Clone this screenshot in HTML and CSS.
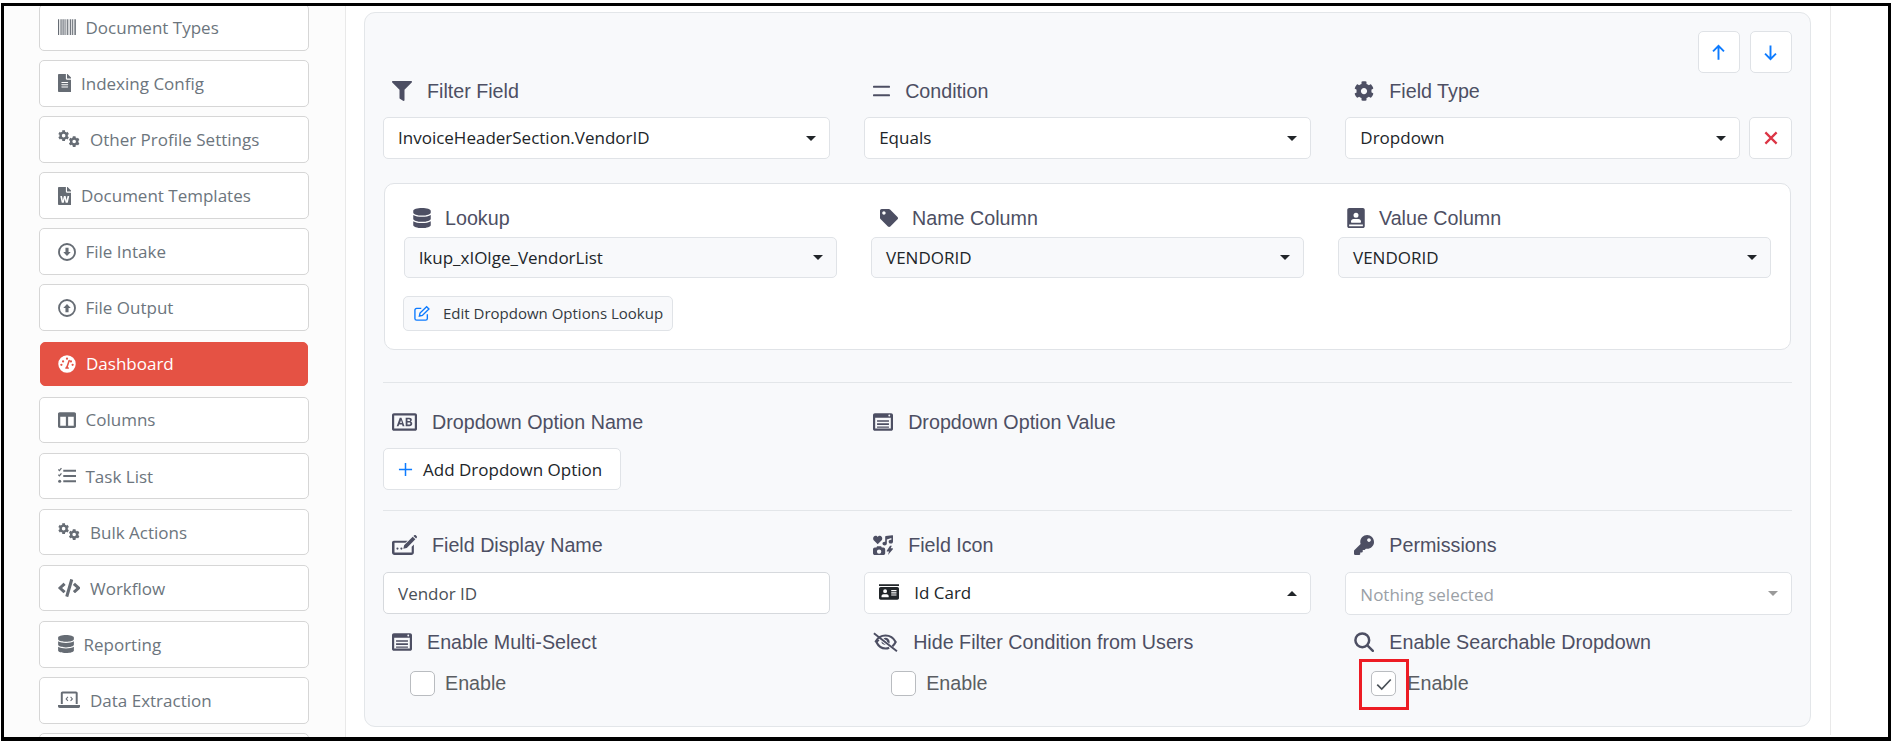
FILE: index.html
```html
<!DOCTYPE html>
<html lang="en">
<head>
<meta charset="utf-8">
<title>Dashboard filter configuration</title>
<link rel="stylesheet" href="styles.css">
</head>
<body>
<svg class="sprite" xmlns="http://www.w3.org/2000/svg">
  <symbol id="i-cog" viewBox="0 0 512 512"><path d="M487.4 315.7l-42.6-24.6c4.3-23.2 4.3-47 0-70.2l42.6-24.6c4.9-2.8 7.1-8.6 5.5-14-11.1-35.6-30-67.8-54.7-94.6-3.8-4.1-10-5.1-14.8-2.3L380.8 110c-17.9-15.4-38.5-27.3-60.8-35.1V25.8c0-5.6-3.9-10.5-9.4-11.7-36.7-8.2-74.3-7.8-109.2 0-5.5 1.2-9.4 6.1-9.4 11.7V75c-22.2 7.9-42.8 19.8-60.8 35.1L88.7 85.5c-4.9-2.8-11-1.9-14.8 2.3-24.7 26.7-43.6 58.9-54.7 94.6-1.7 5.4.6 11.2 5.5 14L67.3 221c-4.3 23.2-4.3 47 0 70.2l-42.6 24.6c-4.9 2.8-7.1 8.6-5.5 14 11.1 35.6 30 67.8 54.7 94.6 3.8 4.1 10 5.1 14.8 2.3l42.6-24.6c17.9 15.4 38.5 27.3 60.8 35.1v49.2c0 5.6 3.9 10.5 9.4 11.7 36.7 8.2 74.3 7.8 109.2 0 5.5-1.2 9.4-6.1 9.4-11.7v-49.2c22.2-7.9 42.8-19.8 60.8-35.1l42.6 24.6c4.9 2.8 11 1.9 14.8-2.3 24.7-26.7 43.6-58.9 54.7-94.6 1.5-5.5-.7-11.3-5.6-14.1zM256 336c-44.1 0-80-35.9-80-80s35.9-80 80-80 80 35.9 80 80-35.9 80-80 80z"/></symbol>
  <symbol id="i-cogs" viewBox="0 0 640 512"><use href="#i-cog" x="0" y="0" width="320" height="320"/><use href="#i-cog" x="300" y="170" width="320" height="320"/></symbol>
  <symbol id="i-database" viewBox="0 0 448 512"><path d="M448 73.143v45.714C448 159.143 347.667 192 224 192S0 159.143 0 118.857V73.143C0 32.857 100.333 0 224 0s224 32.857 224 73.143zM448 176v102.857C448 319.143 347.667 352 224 352S0 319.143 0 278.857V176c48.125 33.143 136.208 48.572 224 48.572S399.874 209.143 448 176zm0 160v102.857C448 479.143 347.667 512 224 512S0 479.143 0 438.857V336c48.125 33.143 136.208 48.572 224 48.572S399.874 369.143 448 336z"/></symbol>
  <symbol id="i-file" viewBox="0 0 384 512"><path d="M224 136V0H24C10.7 0 0 10.7 0 24v464c0 13.3 10.7 24 24 24h336c13.3 0 24-10.7 24-24V160H248c-13.2 0-24-10.8-24-24zm64 236c0 6.6-5.4 12-12 12H108c-6.6 0-12-5.4-12-12v-8c0-6.6 5.4-12 12-12h168c6.6 0 12 5.4 12 12v8zm0-64c0 6.6-5.4 12-12 12H108c-6.6 0-12-5.4-12-12v-8c0-6.6 5.4-12 12-12h168c6.6 0 12 5.4 12 12v8zm0-72v8c0 6.6-5.4 12-12 12H108c-6.6 0-12-5.4-12-12v-8c0-6.6 5.4-12 12-12h168c6.6 0 12 5.4 12 12zm96-114.1v6.1H256V0h6.1c6.4 0 12.5 2.5 17 7l97.9 98c4.5 4.5 7 10.6 7 16.9z"/></symbol>
  <symbol id="i-word" viewBox="0 0 384 512"><path d="M224 136V0H24C10.7 0 0 10.7 0 24v464c0 13.3 10.7 24 24 24h336c13.3 0 24-10.7 24-24V160H248c-13.2 0-24-10.8-24-24zm57.1 120H305c7.7 0 13.4 7.1 11.7 14.7l-38 168c-1.2 5.5-6.1 9.3-11.7 9.3h-38c-5.5 0-10.3-3.8-11.6-9.1-25.8-103.5-20.8-81.2-25.6-110.5h-.5c-1.1 14.3-2.4 17.4-25.6 110.5-1.3 5.3-6.1 9.1-11.6 9.1H117c-5.6 0-10.5-3.9-11.7-9.4l-37.8-168c-1.7-7.5 4-14.6 11.7-14.6h24.5c5.7 0 10.7 4 11.8 9.7 15.6 78 20.1 109.5 21 122.2 1.6-10.2 7.3-32.7 29.4-122.7 1.3-5.4 6.1-9.1 11.7-9.1h29.1c5.6 0 10.4 3.8 11.7 9.2 24 100.4 28.8 124 29.6 129.4-.2-11.2-2.6-17.8 21.6-129.2 1-5.6 5.9-9.5 11.5-9.5zM384 121.9v6.1H256V0h6.1c6.4 0 12.5 2.5 17 7l97.9 98c4.5 4.5 7 10.6 7 16.9z"/></symbol>
  <symbol id="i-barcode" viewBox="0 0 512 512"><path d="M0 32h32v448H0zM56 32h16v448H56zM96 32h32v448H96zM152 32h32v448h-32zM208 32h16v448h-16zM248 32h32v448h-32zM304 32h16v448h-16zM344 32h32v448h-32zM400 32h24v448h-24zM448 32h24v448h-24zM488 32h24v448h-24z"/></symbol>
  <symbol id="i-circle-down" viewBox="0 0 512 512"><circle cx="256" cy="256" r="228" fill="none" stroke="currentColor" stroke-width="52"/><path d="M212 136h88v118h62L256 372 150 254h62z"/></symbol>
  <symbol id="i-circle-up" viewBox="0 0 512 512"><circle cx="256" cy="256" r="228" fill="none" stroke="currentColor" stroke-width="52"/><path d="M212 376h88V258h62L256 140 150 258h62z"/></symbol>
  <symbol id="i-gauge" viewBox="0 0 512 512"><path fill-rule="evenodd" d="M256 8a248 248 0 1 0 0 496 248 248 0 0 0 0-496zm0 64a32 32 0 1 1 0 64 32 32 0 0 1 0-64zM96 248a32 32 0 1 1 0 64 32 32 0 0 1 0-64zm48-96a32 32 0 1 1 0 64 32 32 0 0 1 0-64zm272 96a32 32 0 1 1 0 64 32 32 0 0 1 0-64zm-48-96a32 32 0 1 1 0 64 32 32 0 0 1 0-64zM240 318l58-170c4-12 17-18 28-14s18 17 14 28l-58 170c22 16 30 42 30 56H206c0-30 14-60 34-70z"/></symbol>
  <symbol id="i-columns" viewBox="0 0 512 512"><path d="M464 32H48C21.49 32 0 53.49 0 80v352c0 26.51 21.49 48 48 48h416c26.51 0 48-21.49 48-48V80c0-26.51-21.49-48-48-48zM224 416H64V160h160v256zm224 0H288V160h160v256z"/></symbol>
  <symbol id="i-tasks" viewBox="0 0 512 512"><path d="M150 80h362v56H150zM150 228h362v56H150zM150 376h362v56H150z"/><path d="M10 70l30 32L98 30" fill="none" stroke="currentColor" stroke-width="36"/><path d="M10 220l30 32 58-72" fill="none" stroke="currentColor" stroke-width="36"/><circle cx="48" cy="404" r="44"/></symbol>
  <symbol id="i-code" viewBox="0 0 640 512"><path d="M278.9 511.5l-61-17.7c-6.4-1.8-10-8.5-8.2-14.9L346.2 8.7c1.8-6.4 8.5-10 14.9-8.2l61 17.7c6.4 1.8 10 8.5 8.2 14.9L293.8 503.3c-1.9 6.4-8.5 10.1-14.9 8.2zm-114-112.2l43.5-46.4c4.6-4.9 4.3-12.7-.8-17.2L117 256l90.6-79.7c5.1-4.5 5.5-12.3.8-17.2l-43.5-46.4c-4.5-4.8-12.1-5.1-17-.5L3.8 247.2c-5.1 4.7-5.1 12.8 0 17.5l144.1 135.1c4.9 4.6 12.5 4.4 17-.5zm327.2.6l144.1-135.1c5.1-4.7 5.1-12.8 0-17.5L492.1 112.1c-4.8-4.5-12.4-4.3-17 .5L431.6 159c-4.6 4.9-4.3 12.7.8 17.2L523 256l-90.6 79.7c-5.1 4.5-5.5 12.3-.8 17.2l43.5 46.4c4.5 4.9 12.1 5.1 17 .6z"/></symbol>
  <symbol id="i-laptop-code" viewBox="0 0 640 512"><path d="M80 64c0-26 22-48 48-48h384c26 0 48 22 48 48v304h-56V72H136v296H80zM0 400h640v32c0 26-22 48-48 48H48c-26 0-48-22-48-48z"/><path d="M282 170l-50 54 50 54M358 170l50 54-50 54" fill="none" stroke="currentColor" stroke-width="30"/></symbol>
  <symbol id="i-filter" viewBox="0 0 512 512"><path d="M487.976 0H24.028C2.71 0-8.047 25.866 7.058 40.971L192 225.941V432c0 7.831 3.821 15.17 10.237 19.662l80 55.98C298.02 518.69 320 507.493 320 487.98V225.941l184.947-184.97C520.021 25.896 509.338 0 487.976 0z"/></symbol>
  <symbol id="i-equals" viewBox="0 0 448 320"><path d="M24 20h400c13 0 24 11 24 24v8c0 13-11 24-24 24H24C11 76 0 65 0 52v-8c0-13 11-24 24-24zM24 244h400c13 0 24 11 24 24v8c0 13-11 24-24 24H24c-13 0-24-11-24-24v-8c0-13 11-24 24-24z"/></symbol>
  <symbol id="i-tag" viewBox="0 0 512 512"><path d="M0 252.118V48C0 21.49 21.49 0 48 0h204.118a48 48 0 0 1 33.941 14.059l211.882 211.882c18.745 18.745 18.745 49.137 0 67.882L293.823 497.941c-18.745 18.745-49.137 18.745-67.882 0L14.059 286.059A48 48 0 0 1 0 252.118zM112 64c-26.51 0-48 21.49-48 48s21.49 48 48 48 48-21.49 48-48-21.49-48-48-48z"/></symbol>
  <symbol id="i-book" viewBox="0 0 448 512"><path fill-rule="evenodd" d="M48 0h352c26 0 48 22 48 48v416c0 26-22 48-48 48H48c-26 0-48-22-48-48V48C0 22 22 0 48 0zm176 120a64 64 0 1 0 0 128 64 64 0 0 0 0-128zM96 360c0 10 8 16 16 16h224c8 0 16-6 16-16v-18c0-34-30-62-66-62H162c-36 0-66 28-66 62zM48 424v40h352v-40z"/></symbol>
  <symbol id="i-ab" viewBox="0 0 640 448"><path fill-rule="evenodd" d="M48 0h544c26 0 48 22 48 48v352c0 26-22 48-48 48H48c-26 0-48-22-48-48V48C0 22 22 0 48 0zm8 56v336h528V56z"/><path d="M120 330L198 112h44l78 218h-48l-14-44h-76l-14 44zM208 248h46l-23-74zM350 112h92c42 0 66 20 66 54 0 22-12 38-32 46 26 6 42 26 42 54 0 40-28 64-74 64h-94zm46 88h38c18 0 28-8 28-24s-10-24-28-24h-38zm0 90h44c20 0 30-10 30-26s-10-26-30-26h-44z"/></symbol>
  <symbol id="i-card-list" viewBox="0 0 512 448"><path fill-rule="evenodd" d="M48 0h416c26 0 48 22 48 48v352c0 26-22 48-48 48H48c-26 0-48-22-48-48V48C0 22 22 0 48 0zm8 112v280h400V112zM416 32a24 24 0 1 0 0 48 24 24 0 0 0 0-48z"/><path d="M104 176h304v44H104zM104 256h304v44H104zM104 336h304v36H104z"/></symbol>
  <symbol id="i-pen-field" viewBox="0 0 640 512"><path fill-rule="evenodd" d="M48 144h352l-56 56H64v248h440V300l56-56v204c0 35-29 64-64 64H64c-35 0-64-29-64-64V192c0-26 22-48 48-48z"/><path d="M140 320a28 28 0 1 0 0 56 28 28 0 0 0 0-56zM240 320a28 28 0 1 0 0 56 28 28 0 0 0 0-56zM290 350l20-88L530 42l68 68-220 220zM548 24l22-18c12-9 30-8 40 2l22 22c10 10 11 28 2 40l-18 22z"/></symbol>
  <symbol id="i-icons" viewBox="0 0 512 512"><path d="M120 236L18 132C-14 98 8 20 64 20c26 0 46 12 56 32 10-20 30-32 56-32 56 0 78 78 46 112z"/><path d="M504 8c5 3 8 8 8 14v150c0 30-28 48-56 48s-56-18-56-48 28-48 56-48c5 0 10 1 14 2V78l-116 36v106c0 30-28 48-56 48s-56-18-56-48 28-48 56-48c5 0 10 1 14 2V48c0-9 6-17 15-20L490 4c5-1 10 0 14 4z"/><path fill-rule="evenodd" d="M48 320h40l16-32h104l16 32h40c26 0 48 22 48 48v96c0 26-22 48-48 48H48c-26 0-48-22-48-48v-96c0-26 22-48 48-48zm108 48a56 56 0 1 0 0 112 56 56 0 0 0 0-112z"/><path d="M436 272l-84 128c-6 10 0 22 12 22h46l-26 90 124-148c8-10 2-24-12-24h-44l30-68z"/></symbol>
  <symbol id="i-eye-slash" viewBox="0 0 640 512"><path d="M38 12l590 460-30 38L8 50z"/><path fill="none" stroke="currentColor" stroke-width="56" d="M60 256C120 140 210 90 320 90s200 50 260 166c-24 46-50 84-86 112M146 196c-22 20-42 36-60 60 56 114 146 166 234 166 34 0 64-6 94-20"/><path d="M320 150c58 0 106 48 106 106 0 14-3 28-8 40l-58-44c0-28-18-50-46-52l-44-34c14-10 32-16 50-16zM216 246l110 84c-2 0-4 1-6 1-58 0-106-30-104-85z"/></symbol>
  <symbol id="i-key" viewBox="0 0 512 512"><path d="M512 176.001C512 273.203 433.202 352 336 352c-11.22 0-22.19-1.062-32.827-3.069l-24.012 27.014A23.999 23.999 0 0 1 261.223 384H224v40c0 13.255-10.745 24-24 24h-40v40c0 13.255-10.745 24-24 24H24c-13.255 0-24-10.745-24-24v-78.059c0-6.365 2.529-12.47 7.029-16.971l161.802-161.802C163.108 213.814 160 195.271 160 176 160 78.798 238.797.001 335.999 0 433.488-.001 512 78.511 512 176.001zM336 128c0 26.51 21.49 48 48 48s48-21.49 48-48-21.49-48-48-48-48 21.49-48 48z"/></symbol>
  <symbol id="i-search" viewBox="0 0 512 512"><circle cx="212" cy="212" r="176" fill="none" stroke="currentColor" stroke-width="64"/><path d="M326 370l44-44 134 134c12 12 12 32 0 44s-32 12-44 0z"/></symbol>
  <symbol id="i-id-card" viewBox="0 0 576 512"><path fill-rule="evenodd" d="M0 32h576v48H0zM48 112h480c26 0 48 22 48 48v272c0 26-22 48-48 48H48c-26 0-48-22-48-48V160c0-26 22-48 48-48zm128 64a56 56 0 1 0 0 112 56 56 0 0 0 0-112zM72 392c0 8 7 16 16 16h176c9 0 16-8 16-16v-16c0-30-26-56-56-56h-96c-30 0-56 26-56 56zm280-192v32h152v-32zm0 64v32h152v-32zm0 64v32h152v-32z"/></symbol>
</svg>

<div class="screen">
  <div class="frame">
    <nav class="sidebar">
      <a class="nav-item"><svg class="nav-icon w18"><use href="#i-barcode"/></svg><span class="gap10">Document Types</span></a>
      <a class="nav-item"><svg class="nav-icon w14"><use href="#i-file"/></svg><span class="gap10">Indexing Config</span></a>
      <a class="nav-item"><svg class="nav-icon w23"><use href="#i-cogs"/></svg><span class="gap10">Other Profile Settings</span></a>
      <a class="nav-item"><svg class="nav-icon w14"><use href="#i-word"/></svg><span class="gap10">Document Templates</span></a>
      <a class="nav-item"><svg class="nav-icon w18"><use href="#i-circle-down"/></svg><span class="gap10">File Intake</span></a>
      <a class="nav-item"><svg class="nav-icon w18"><use href="#i-circle-up"/></svg><span class="gap10">File Output</span></a>
      <a class="nav-item active"><svg class="nav-icon w18"><use href="#i-gauge"/></svg><span class="gap10">Dashboard</span></a>
      <a class="nav-item"><svg class="nav-icon w18"><use href="#i-columns"/></svg><span class="gap10">Columns</span></a>
      <a class="nav-item"><svg class="nav-icon w18"><use href="#i-tasks"/></svg><span class="gap10">Task List</span></a>
      <a class="nav-item"><svg class="nav-icon w23"><use href="#i-cogs"/></svg><span class="gap10">Bulk Actions</span></a>
      <a class="nav-item"><svg class="nav-icon w23"><use href="#i-code"/></svg><span class="gap10">Workflow</span></a>
      <a class="nav-item"><svg class="nav-icon w16"><use href="#i-database"/></svg><span class="gap10">Reporting</span></a>
      <a class="nav-item"><svg class="nav-icon w23"><use href="#i-laptop-code"/></svg><span class="gap10">Data Extraction</span></a>
      <a class="nav-item"></a>
    </nav>

    <main class="content">
      <section class="panel">
        <div class="move-row">
          <button class="icon-btn"><svg class="stroke-icon" viewBox="0 0 16 16"><path d="M8 14V2.600M3.400 7L8 2.400 12.600 7"/></svg></button>
          <button class="icon-btn"><svg class="stroke-icon" viewBox="0 0 16 16"><path d="M8 2v11.400M3.400 9L8 13.600 12.600 9"/></svg></button>
        </div>

        <div class="grid-3">
          <div>
            <div class="label label-top"><svg class="lbl-icon"><use href="#i-filter"/></svg>Filter Field</div>
            <div class="select"><span>InvoiceHeaderSection.VendorID</span><i class="caret"></i></div>
          </div>
          <div>
            <div class="label label-top"><svg class="lbl-icon equals"><use href="#i-equals"/></svg>Condition</div>
            <div class="select"><span>Equals</span><i class="caret"></i></div>
          </div>
          <div>
            <div class="label label-top"><svg class="lbl-icon"><use href="#i-cog"/></svg>Field Type</div>
            <div class="select-row">
              <div class="select grow"><span>Dropdown</span><i class="caret"></i></div>
              <button class="icon-btn tall"><svg class="stroke-icon red" viewBox="0 0 16 16"><path d="M3 3l10 10M13 3L3 13"/></svg></button>
            </div>
          </div>
        </div>

        <div class="subpanel">
          <div class="sub-grid">
            <div>
              <div class="label label-sub"><svg class="lbl-icon w18"><use href="#i-database"/></svg>Lookup</div>
              <div class="select soft"><span>lkup_xIOlge_VendorList</span><i class="caret"></i></div>
            </div>
            <div>
              <div class="label label-sub"><svg class="lbl-icon w18"><use href="#i-tag"/></svg>Name Column</div>
              <div class="select soft"><span>VENDORID</span><i class="caret"></i></div>
            </div>
            <div>
              <div class="label label-sub"><svg class="lbl-icon w18"><use href="#i-book"/></svg>Value Column</div>
              <div class="select soft"><span>VENDORID</span><i class="caret"></i></div>
            </div>
          </div>
          <button class="edit-btn"><svg class="edit-icon" viewBox="0 0 16 16"><path d="M13.500 8.600v4a1.600 1.600 0 0 1-1.600 1.600H3.400a1.600 1.600 0 0 1-1.600-1.600V4.800a1.600 1.600 0 0 1 1.600-1.600h4.400"/><path d="M6 10.400l.6-2.800 6.200-6 2.200 2.200-6.200 6z"/></svg>Edit Dropdown Options Lookup</button>
        </div>

        <hr class="rule rule-first">

        <div class="grid-3">
          <div>
            <div class="label"><svg class="lbl-icon w25"><use href="#i-ab"/></svg>Dropdown Option Name</div>
            <button class="add-btn"><svg class="plus-icon" viewBox="0 0 16 16"><path d="M8 1v14M1 8h14"/></svg>Add Dropdown Option</button>
          </div>
          <div>
            <div class="label"><svg class="lbl-icon"><use href="#i-card-list"/></svg>Dropdown Option Value</div>
          </div>
        </div>

        <hr class="rule rule-second">

        <div class="grid-3">
          <div>
            <div class="label label-field"><svg class="lbl-icon w25"><use href="#i-pen-field"/></svg>Field Display Name</div>
            <input class="text-input" type="text" value="Vendor ID">
          </div>
          <div>
            <div class="label label-field"><svg class="lbl-icon"><use href="#i-icons"/></svg>Field Icon</div>
            <div class="select"><span class="with-icon"><svg class="id-icon"><use href="#i-id-card"/></svg>Id Card</span><i class="caret up"></i></div>
          </div>
          <div>
            <div class="label label-field"><svg class="lbl-icon"><use href="#i-key"/></svg>Permissions</div>
            <div class="select muted"><span>Nothing selected</span><i class="caret"></i></div>
          </div>
        </div>

        <div class="grid-3 toggles">
          <div>
            <div class="label tight"><svg class="lbl-icon"><use href="#i-card-list"/></svg>Enable Multi-Select</div>
            <label class="check"><span class="box"></span>Enable</label>
          </div>
          <div>
            <div class="label tight"><svg class="lbl-icon w25"><use href="#i-eye-slash"/></svg>Hide Filter Condition from Users</div>
            <label class="check"><span class="box"></span>Enable</label>
          </div>
          <div>
            <div class="label tight"><svg class="lbl-icon"><use href="#i-search"/></svg>Enable Searchable Dropdown</div>
            <label class="check checked"><span class="box"><svg class="tick" viewBox="0 0 16 16"><path d="M2 8.500l4 4 8-8.500"/></svg><span class="highlight"></span></span>Enable</label>
          </div>
        </div>
      </section>
    </main>
  </div>
</div>
</body>
</html>
```

FILE: styles.css
```css
* { box-sizing: border-box; }
html, body { margin: 0; padding: 0; background: #fff; }
body { width: 1892px; height: 742px; overflow: hidden; font-family: "Liberation Sans", Arial, sans-serif; }
.sprite { display: none; }

.screen { padding: 3px 1px 1px 1px; height: 742px; }
.frame { height: 738px; border: 3px solid #000; border-width: 3px 3px 4px 3px; display: flex; overflow: hidden; background: #fff; }

/* sidebar */
.sidebar { width: 342px; flex: none; padding: 0 0 0 35px; margin-top: -2px; background: #fcfcfc; border-right: 1px solid #e9e9e9; display: flex; flex-direction: column; gap: 9.6px; }
.nav-item { width: 269.500px; height: 46.500px; flex: none; display: flex; align-items: center; padding-left: 17.500px; background: #fff; border: 1px solid #d6d6d6; border-radius: 5px; color: #6c757d; font: 17px/1 "Open Sans", sans-serif; }
.nav-item.active { background: #e55244; border-color: #e55244; color: #fff; width: 268.500px; height: 44.500px; margin: 1px 0 1px .5px; }
.nav-icon { height: 18px; fill: currentColor; color: #666c74; flex: none; }
.active .nav-icon { color: #fff; }
.w14 { width: 13.500px; height: 18px; }
.w16 { width: 16px; height: 18px; }
.w18 { width: 18px; height: 18px; }
.w23 { width: 22.500px; height: 18px; }
.gap10 { margin-left: 10px; }

/* content */
.content { width: 1485px; flex: none; padding: 6px 18px 0 18px; border-right: 1px solid #e9e9e9; height: 729px; }
.panel { width: 1447px; height: 715px; padding: 18px 18px 0 18px; background: #f8f9fb; border: 1px solid #e3e6e9; border-radius: 11px; }
.move-row { display: flex; justify-content: flex-end; gap: 9.500px; height: 42px; }
.icon-btn { width: 42.500px; height: 42px; padding: 0; flex: none; display: flex; align-items: center; justify-content: center; background: #fff; border: 1px solid #dfe2e6; border-radius: 5px; }
.stroke-icon { width: 19px; height: 19px; fill: none; stroke: #0d7bff; stroke-width: 1.600; }
.stroke-icon.red { stroke: #dc3545; width: 18px; height: 18px; stroke-width: 2; }

.grid-3 { display: grid; grid-template-columns: repeat(3, 1fr); column-gap: 34.500px; }
.label { display: flex; align-items: center; height: 24px; padding-left: 9px; color: #4d4f63; font-size: 19.700px; margin: 27px 0 14px; white-space: nowrap; }
.label-top { margin: 6px 0 14px; }
.label-sub { margin: 22px 0 7px; }
.label-field { margin: 22px 0 15px; }
.label.tight { margin: 15px 0 17px; }
.lbl-icon { width: 20px; height: 20px; margin-right: 15px; fill: currentColor; flex: none; }
.lbl-icon.equals { width: 17px; }
.lbl-icon.w18 { width: 18px; margin-right: 14px; }
.lbl-icon.w25 { width: 25px; }

.select { height: 42px; display: flex; align-items: center; justify-content: space-between; padding: 0 13px 0 14px; background: #fff; border: 1px solid #e0e3e7; border-radius: 5px; color: #212529; font: 17px/1 "Open Sans", sans-serif; }
.select > span { padding-bottom: 2px; }
.select.soft { background: #f8f9fb; height: 41px; }
.select.soft > span { padding-bottom: 1px; }
.select.muted { color: #9aa0a6; margin-top: 2px; height: 43px; }
.select.muted > span { padding: 2px 0 0; }
.select.muted .caret { border-top-color: #9a9a9a; }
.select-row { display: flex; gap: 9.500px; }
.grow { flex: 1; min-width: 0; }
.caret { width: 0; height: 0; border-left: 5px solid transparent; border-right: 5px solid transparent; border-top: 5px solid #212529; flex: none; }
.caret.up { border-top: 0; border-bottom: 5px solid #212529; }
.with-icon { display: flex; align-items: center; }
.id-icon { width: 20px; height: 18px; margin-right: 15px; fill: #212529; }

.subpanel { margin: 24px 1px 0 1px; height: 167px; padding: 0 19px; background: #fff; border: 1px solid #e0e3e7; border-radius: 10px; }
.sub-grid { display: grid; grid-template-columns: repeat(3, 1fr); column-gap: 34px; }
.edit-btn { display: flex; align-items: center; height: 35px; margin: 18px 0 0 -1px; padding: 0 9px; background: #f8f9fb; border: 1px solid #e0e3e7; border-radius: 5px; color: #343a40; font: 15px/1 "Open Sans", sans-serif; white-space: nowrap; }
.edit-icon { width: 17px; height: 17px; margin-right: 13px; fill: none; stroke: #0d7bff; stroke-width: 1.300; }

.rule { height: 1px; border: 0; background: #e3e6e9; margin: 0; }
.rule-first { margin-top: 32px; }
.rule-second { margin-top: 20px; }
.add-btn { display: flex; align-items: center; height: 42px; width: 238px; padding: 0 14px; background: #fff; border: 1px solid #e0e3e7; border-radius: 5px; color: #212529; font: 17px/1 "Open Sans", sans-serif; white-space: nowrap; }
.plus-icon { width: 15px; height: 15px; margin-right: 10px; fill: none; stroke: #0d7bff; stroke-width: 1.600; flex: none; }
.text-input { display: block; width: 100%; height: 42px; padding: 0 14px; background: #fff; border: 1px solid #d6d9dd; border-radius: 5px; color: #495057; font: 17px/1 "Open Sans", sans-serif; outline: 0; }

.check { display: flex; align-items: center; height: 25px; padding-left: 27px; color: #5a5d62; font-size: 19.700px; }
.box { position: relative; width: 25px; height: 25px; margin-right: 10px; background: #fff; border: 1px solid #b9bcc0; border-radius: 5px; display: flex; align-items: center; justify-content: center; flex: none; }
.checked { padding-left: 26px; }
.checked .box { margin-right: 11px; }
.tick { width: 18px; height: 18px; fill: none; stroke: #495057; stroke-width: 1.500; }
.highlight { position: absolute; left: -13px; top: -13px; width: 50px; height: 51px; border: 3px solid #ed1c24; }
```
